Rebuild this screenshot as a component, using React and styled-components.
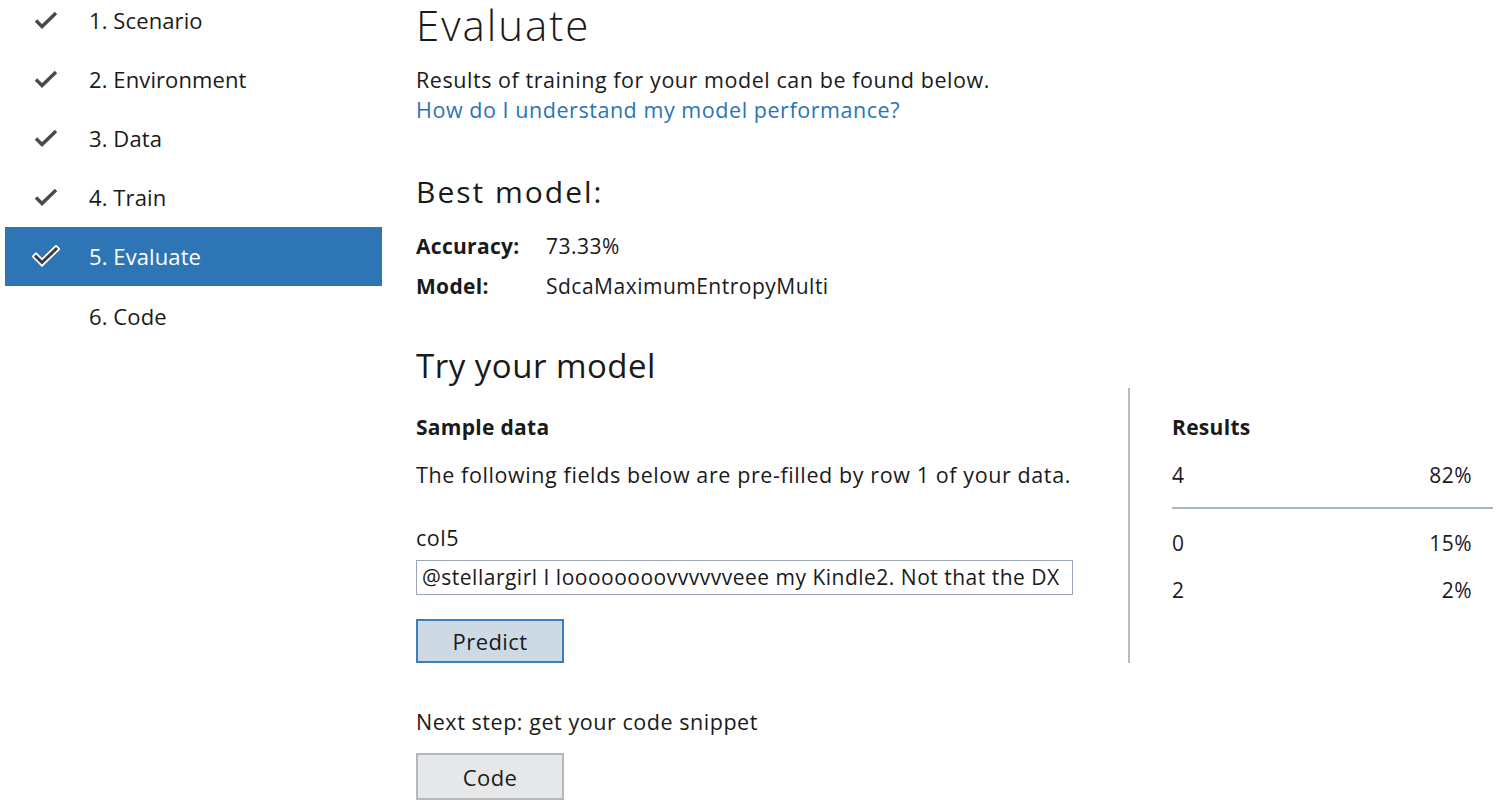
import React from 'react';
import styled, { createGlobalStyle } from 'styled-components';

const GlobalStyle = createGlobalStyle`
	html, body {
		margin: 0;
		padding: 0;
		background: #ffffff;
	}
	body {
		font-family: "Open Sans", "Noto Sans", "Liberation Sans", sans-serif;
		color: #1a1a1a;
		overflow: hidden;
	}
`;

const steps = [
	{ label: '1. Scenario', done: true },
	{ label: '2. Environment', done: true },
	{ label: '3. Data', done: true },
	{ label: '4. Train', done: true },
	{ label: '5. Evaluate', done: true, active: true },
	{ label: '6. Code', done: false },
];

const results = [
	{ label: '4', value: '82%', top: true },
	{ label: '0', value: '15%' },
	{ label: '2', value: '2%' },
];

// 체크 아이콘 (활성 상태는 흰색 외곽선 + 진회색)
const CheckIcon = ({ active }) => (
	<svg width="28" height="22" viewBox="0 0 28 22">
		{active ? (
			<>
				<path d="M4 11.5 L10 17.5 L24 4" fill="none" stroke="#ffffff" strokeWidth="6.5" strokeLinejoin="miter" strokeLinecap="square" />
				<path d="M4 11.5 L10 17.5 L24 4" fill="none" stroke="#3c3c3c" strokeWidth="3" strokeLinejoin="miter" strokeLinecap="square" />
			</>
		) : (
			<path d="M4 11.5 L10 17.5 L24 4" fill="none" stroke="#4a4a4a" strokeWidth="3.4" strokeLinejoin="miter" />
		)}
	</svg>
);

export default function App() {
	return (
		<>
			<GlobalStyle />
			<Page>
				<Sidebar>
					{steps.map((step) => (
						<StepItem key={step.label} $active={step.active}>
							<IconSlot>{step.done && <CheckIcon active={step.active} />}</IconSlot>
							<StepLabel>{step.label}</StepLabel>
						</StepItem>
					))}
				</Sidebar>

				<Main>
					<Title>Evaluate</Title>
					<Intro>Results of training for your model can be found below.</Intro>
					<HelpLink href="#">How do I understand my model performance?</HelpLink>

					<SectionTitle>Best model:</SectionTitle>
					<MetricGrid>
						<MetricKey>Accuracy:</MetricKey>
						<MetricValue>73.33%</MetricValue>
						<MetricKey>Model:</MetricKey>
						<MetricValue>SdcaMaximumEntropyMulti</MetricValue>
					</MetricGrid>

					<TryTitle>Try your model</TryTitle>
					<TryPanel>
						<SampleColumn>
							<ColumnHeading>Sample data</ColumnHeading>
							<BodyText>The following fields below are pre-filled by row 1 of your data.</BodyText>
							<FieldLabel>col5</FieldLabel>
							<TextInput
								readOnly
								value="@stellargirl I loooooooovvvvvveee my Kindle2. Not that the DX is cool, but the 2 is fantastic in its own right."
							/>
							<ActionButton $primary>Predict</ActionButton>
						</SampleColumn>
						<ResultsColumn>
							<ColumnHeading>Results</ColumnHeading>
							{results.map((r) => (
								<ResultRow key={r.label} $top={r.top}>
									<span>{r.label}</span>
									<span>{r.value}</span>
								</ResultRow>
							))}
						</ResultsColumn>
					</TryPanel>

					<NextStep>Next step: get your code snippet</NextStep>
					<ActionButton>Code</ActionButton>
				</Main>
			</Page>
		</>
	);
}

const Page = styled.div`
	display: flex;
	width: 1500px;
	height: 807px;
	overflow: hidden;
`;

const Sidebar = styled.nav`
	width: 377px;
	margin-left: 5px;
	margin-top: -10px;
	display: flex;
	flex-direction: column;
	flex-shrink: 0;
`;

const StepItem = styled.div`
	display: flex;
	align-items: center;
	height: 59.2px;
	background: ${props => props.$active ? '#2e75b6' : 'transparent'};
	color: ${props => props.$active ? '#ffffff' : '#1a1a1a'};
`;

const IconSlot = styled.div`
	width: 84px;
	display: flex;
	padding-left: 27px;
	box-sizing: border-box;
`;

const StepLabel = styled.span`
	font-size: 22px;
	letter-spacing: 0.1px;
`;

const Main = styled.main`
	margin-left: 34px;
	display: flex;
	flex-direction: column;
	align-items: flex-start;
	flex: 1;
`;

const Title = styled.h1`
	margin: 2px 0 0;
	font-size: 42px;
	font-weight: 300;
	line-height: 46px;
	letter-spacing: 2px;
`;

const Intro = styled.div`
	margin-top: 17px;
	font-size: 21.5px;
	line-height: 30px;
	letter-spacing: 0.55px;
`;

const HelpLink = styled.a`
	font-size: 21.5px;
	line-height: 30px;
	letter-spacing: 0.55px;
	color: #2b73b7;
	text-decoration: none;
`;

const SectionTitle = styled.h2`
	margin: 47px 0 0;
	font-size: 30px;
	font-weight: 400;
	line-height: 40px;
	letter-spacing: 2px;
`;

const MetricGrid = styled.div`
	display: grid;
	grid-template-columns: 130px auto;
	row-gap: 10px;
	margin-top: 19px;
	font-size: 21px;
	line-height: 30px;
	letter-spacing: 0.5px;
`;

const MetricKey = styled.span`
	font-weight: 700;
	letter-spacing: 0.3px;
`;

const MetricValue = styled.span`
	font-weight: 400;
`;

const TryTitle = styled.h2`
	margin: 44px 0 0;
	font-size: 33px;
	font-weight: 400;
	line-height: 42px;
	letter-spacing: 0.5px;
`;

const TryPanel = styled.div`
	display: grid;
	grid-template-columns: 714px 363px;
	margin-top: 1px;
`;

const SampleColumn = styled.div`
	display: flex;
	flex-direction: column;
	align-items: flex-start;
	padding: 24px 0 0 0;
	border-right: 2px solid #b8bcc2;
	height: 275px;
	box-sizing: border-box;
`;

const ResultsColumn = styled.div`
	display: flex;
	flex-direction: column;
	width: 321px;
	padding: 24px 0 0 42px;
`;

const ColumnHeading = styled.div`
	font-size: 21px;
	font-weight: 700;
	line-height: 30px;
	letter-spacing: 0.3px;
`;

const BodyText = styled.div`
	margin-top: 18px;
	font-size: 21.5px;
	line-height: 30px;
	letter-spacing: 0.6px;
`;

const FieldLabel = styled.div`
	margin-top: 33px;
	font-size: 21.5px;
	line-height: 30px;
	letter-spacing: 0.55px;
`;

const TextInput = styled.input`
	margin-top: 7px;
	width: 657px;
	height: 35px;
	box-sizing: border-box;
	border: 1px solid #9aa6b3;
	padding: 0 5px;
	font-family: "Open Sans", "Noto Sans", sans-serif;
	font-size: 21px;
	letter-spacing: 0.5px;
	color: #1a1a1a;
	outline: none;
`;

const ActionButton = styled.button`
	margin-top: ${props => props.$primary ? '24px' : '16px'};
	width: 148px;
	height: ${props => props.$primary ? '45px' : '47px'};
	box-sizing: border-box;
	border: ${props => props.$primary ? '2px solid #3d80b8' : '2px solid #b4b7bb'};
	background: ${props => props.$primary ? '#cdd9e5' : '#e6e7e9'};
	font-family: "Open Sans", "Noto Sans", sans-serif;
	font-size: 22px;
	letter-spacing: 0.4px;
	color: #1a1a1a;
	padding: 0;
	cursor: pointer;
`;

const ResultRow = styled.div`
	display: flex;
	justify-content: space-between;
	padding-right: 21px;
	margin-top: ${props => props.$top ? '18px' : '0'};
	margin-bottom: ${props => props.$top ? '11px' : '0'};
	height: 47px;
	line-height: ${props => props.$top ? '30px' : '47px'};
	font-size: 21px;
	letter-spacing: 0.5px;
	border-bottom: ${props => props.$top ? '2px solid #a9b6c3' : 'none'};
`;

const NextStep = styled.div`
	margin-top: 44px;
	font-size: 21.5px;
	line-height: 30px;
	letter-spacing: 0.55px;
`;
